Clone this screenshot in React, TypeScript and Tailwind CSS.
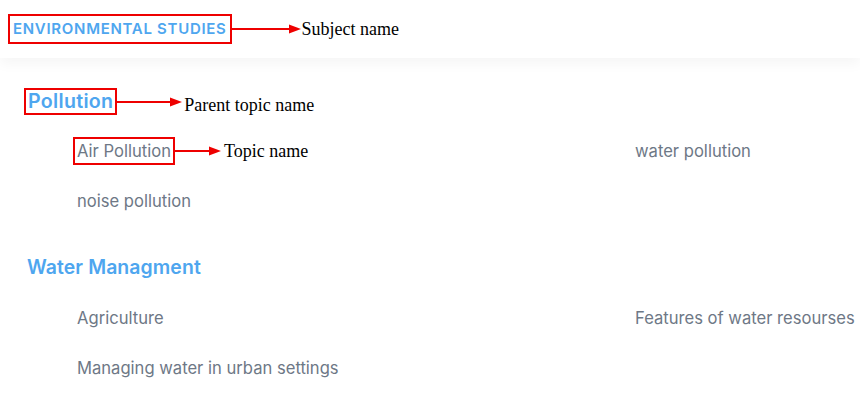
function Arrow({ w }: { w: number }) {
  return (
    <svg width={w} height="12" viewBox={`0 0 ${w} 12`} className="shrink-0">
      <line x1="0" y1="6" x2={w - 10} y2="6" stroke="#ee0000" strokeWidth="2" />
      <polygon points={`${w - 12},1.5 ${w},6 ${w - 12},10.5`} fill="#ee0000" />
    </svg>
  )
}

const note = "text-[18px] text-black font-['Liberation_Serif',serif] leading-none"

function Topic({ label }: { label: string }) {
  return <div className="text-[16.6px] text-[#6e7886] leading-[20px]">{label}</div>
}

export default function App() {
  return (
    <div className="min-h-screen bg-white font-['Inter',sans-serif]">
      <div className="h-[58px] bg-white flex items-center pl-2 shadow-[0_6px_12px_rgba(0,0,0,0.04)] relative">
        <div className="border-2 border-[#ee0000] h-[30px] px-[3px] flex items-center">
          <span className="text-[15px] font-semibold uppercase tracking-[0.7px] text-[#4ea6ef]">
            Environmental Studies
          </span>
        </div>
        <Arrow w={69} />
        <span className={`${note} ml-[1px]`}>Subject name</span>
      </div>

      <div className="pl-6 pt-[30px]">
        <div className="flex items-center h-[27px]">
          <div className="border-2 border-[#ee0000] h-[27px] px-[2px] flex items-center">
            <span className="text-[19.6px] font-semibold tracking-[0.3px] text-[#4ea6ef]">Pollution</span>
          </div>
          <Arrow w={65} />
          <span className={`${note} ml-[2px] mt-[6px]`}>Parent topic name</span>
        </div>

        <div className="grid grid-cols-[558px_1fr] pl-[53px] mt-[22px] gap-y-[26px]">
          <div className="flex items-center -ml-[4px]">
            <div className="border-2 border-[#ee0000] h-[28px] px-[2px] flex items-center">
              <Topic label="Air Pollution" />
            </div>
            <Arrow w={46} />
            <span className={`${note} ml-[3px]`}>Topic name</span>
          </div>
          <div className="flex items-center">
            <Topic label="water pollution" />
          </div>
          <Topic label="noise pollution" />
        </div>

        <div className="text-[19.4px] font-semibold tracking-[0.1px] text-[#4ea6ef] mt-[42px] pl-[3px]">Water Managment</div>

        <div className="grid grid-cols-[558px_1fr] pl-[53px] mt-[26px] gap-y-[30px]">
          <Topic label="Agriculture" />
          <Topic label="Features of water resourses" />
          <Topic label="Managing water in urban settings" />
        </div>
      </div>
    </div>
  )
}
